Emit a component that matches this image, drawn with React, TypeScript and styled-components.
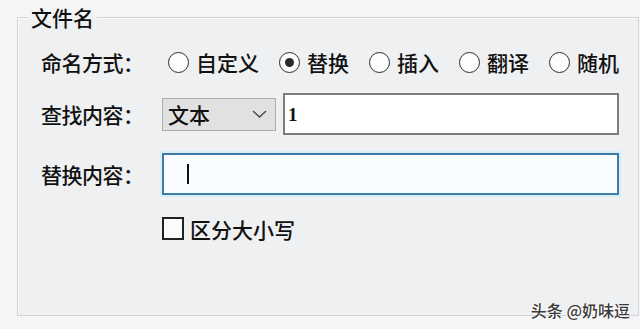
import React from "react";
import styled, { createGlobalStyle } from "styled-components";

const GlobalStyle = createGlobalStyle`
  html, body {
    margin: 0;
    padding: 0;
    background: #f5f5f5;
  }
  body {
    font-family: "Noto Sans CJK SC", "Noto Sans", sans-serif;
    font-weight: 500;
    color: #111;
  }
`;

const Page = styled.div`
  position: relative;
  box-sizing: border-box;
  width: 640px;
  height: 329px;
  padding: 6px 5px 0 17px;
  overflow: hidden;
`;

const GroupBox = styled.fieldset`
  box-sizing: border-box;
  margin: 0;
  width: 619px;
  height: 310px;
  padding: 0 19px 0 10px;
  border: 1px solid #d4d4d4;
  background: #eff0f1;
  box-shadow: inset 1px 1px 0 #fafafa;
`;

const Legend = styled.legend`
  padding: 0 3px;
  font-size: 21px;
  line-height: 22px;
  color: #111;
`;

const Form = styled.div`
  display: grid;
  grid-template-columns: 121px 1fr;
  grid-template-rows: 26px 42px 42px 31px;
  row-gap: 18px;
  align-items: center;
  margin: 21px 0 0 13px;
`;

const Label = styled.div`
  font-size: 21px;
  line-height: 26px;
  white-space: nowrap;
  letter-spacing: -0.5px;
`;

const RadioGroup = styled.div`
  display: flex;
  align-items: center;
  gap: 20px;
  padding-left: 6px;
`;

const RadioItem = styled.label`
  display: flex;
  align-items: center;
  gap: 7px;
  font-size: 21px;
  line-height: 26px;
  white-space: nowrap;
`;

const RadioCircle = styled.span<{ $checked?: boolean }>`
  box-sizing: border-box;
  display: flex;
  align-items: center;
  justify-content: center;
  width: 21px;
  height: 21px;
  border: 1.6px solid #2b2b2b;
  border-radius: 50%;
  background: #fdfdfd;
  &::after {
    content: "";
    display: ${(p) => (p.$checked ? "block" : "none")};
    width: 9px;
    height: 9px;
    border-radius: 50%;
    background: #2b2b2b;
  }
`;

const FindRow = styled.div`
  display: flex;
  align-items: center;
  gap: 7px;
`;

const Select = styled.div`
  box-sizing: border-box;
  display: flex;
  align-items: center;
  justify-content: space-between;
  width: 114px;
  height: 33px;
  padding: 0 8px 0 5px;
  background: #e1e1e1;
  border: 1px solid #adadad;
  font-size: 21px;
  line-height: 26px;
`;

const TextBox = styled.div`
  box-sizing: border-box;
  display: flex;
  align-items: center;
  flex: 1;
  height: 42px;
  padding: 1px 0 0 3px;
  background: #ffffff;
  border: 2px solid #7d7d7d;
  font-family: "Liberation Serif", serif;
  font-size: 19px;
  font-weight: 600;
  color: #111;
`;

const ActiveBox = styled.div`
  box-sizing: border-box;
  display: flex;
  align-items: center;
  height: 42px;
  padding-left: 23px;
  background: #fafdff;
  border: 2px solid #3f7ba3;
  box-shadow: 0 0 0 2px #d6eef8;
`;

const Caret = styled.span`
  display: block;
  width: 2px;
  height: 20px;
  background: #111;
`;

const CheckRow = styled.label`
  grid-column: 2;
  display: flex;
  align-items: center;
  gap: 6px;
  font-size: 21px;
  line-height: 26px;
`;

const CheckBox = styled.span`
  box-sizing: border-box;
  width: 22px;
  height: 23px;
  border: 2px solid #222;
  background: #fbfbfb;
`;

const Watermark = styled.div`
  position: absolute;
  right: 10px;
  bottom: 10px;
  font-size: 16px;
  line-height: 18px;
  color: #3a3a3a;
  text-shadow: 1px 1px 0 #ffffff, -1px 0 0 #ffffff;
  white-space: nowrap;
`;

const Chevron = () => (
  <svg width="15" height="8" viewBox="0 0 15 8" aria-hidden="true">
    <polyline points="1,1 7.5,7 14,1" fill="none" stroke="#444" strokeWidth="1.3" />
  </svg>
);

const modes = [
  { text: "自定义", checked: false },
  { text: "替换", checked: true },
  { text: "插入", checked: false },
  { text: "翻译", checked: false },
  { text: "随机", checked: false },
];

export default function App() {
  return (
    <>
      <GlobalStyle />
      <Page>
        <GroupBox>
          <Legend>文件名</Legend>
          <Form>
            <Label>命名方式：</Label>
            <RadioGroup>
              {modes.map((m) => (
                <RadioItem key={m.text}>
                  <RadioCircle $checked={m.checked} />
                  {m.text}
                </RadioItem>
              ))}
            </RadioGroup>

            <Label>查找内容：</Label>
            <FindRow>
              <Select>
                <span>文本</span>
                <Chevron />
              </Select>
              <TextBox>1</TextBox>
            </FindRow>

            <Label>替换内容：</Label>
            <ActiveBox>
              <Caret />
            </ActiveBox>

            <CheckRow>
              <CheckBox />
              区分大小写
            </CheckRow>
          </Form>
        </GroupBox>
        <Watermark>头条 @奶味逗</Watermark>
      </Page>
    </>
  );
}
